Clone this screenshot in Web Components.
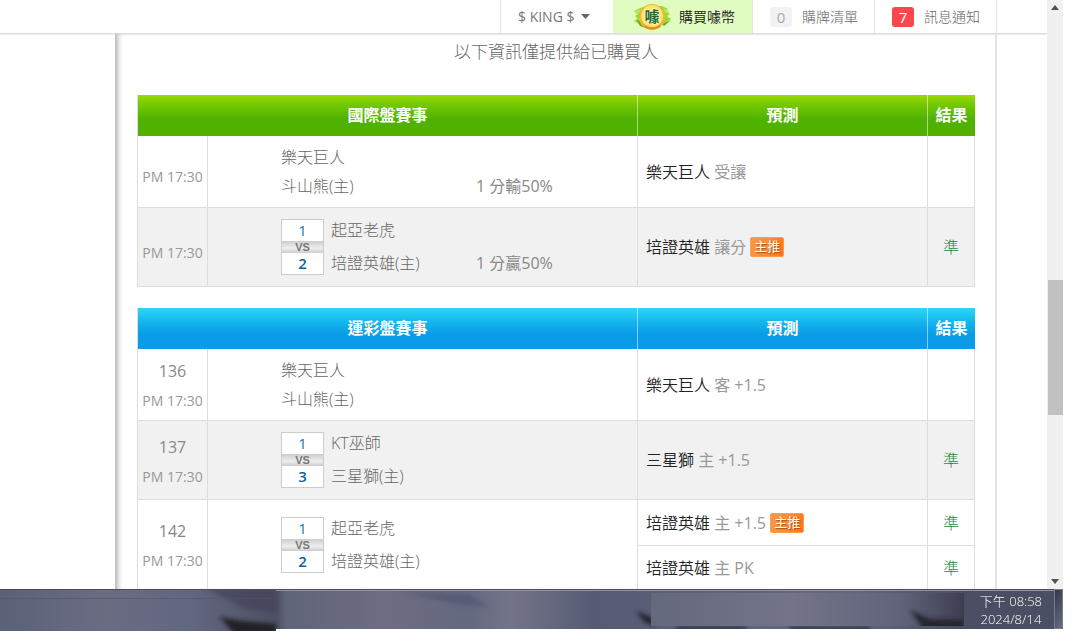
<!DOCTYPE html>
<html lang="zh-Hant">
<head>
<meta charset="utf-8">
<title>國際盤賽事</title>
<style>
  body {
    margin: 0;
    height: 100vh;
    overflow: hidden;
    background: #fff;
    color: #666;
    font: 300 16px/28px "Open Sans", "Noto Sans CJK TC", sans-serif;
  }
</style>
</head>
<body>
<desk-top>
  <nav-bar slot="nav">
    <nav-item kind="menu">$ KING $</nav-item>
    <nav-item kind="coin">購買噱幣</nav-item>
    <nav-item count="0">購牌清單</nav-item>
    <nav-item count="7" hot>訊息通知</nav-item>
  </nav-bar>
  <page-panel>
    <span slot="notice">以下資訊僅提供給已購買人</span>
    <odds-board theme="green" label="國際盤賽事"></odds-board>
    <odds-board theme="blue" label="運彩盤賽事"></odds-board>
  </page-panel>
  <scroll-track slot="scroll"></scroll-track>
  <task-bar slot="taskbar">
    <span slot="time">下午 08:58</span>
    <span slot="date">2024/8/14</span>
  </task-bar>
</desk-top>

<script>
class Base extends HTMLElement {
  constructor() {
    super();
    this.attachShadow({ mode: "open" });
  }
  connectedCallback() {
    this.shadowRoot.innerHTML = this.render();
  }
}

class DeskTop extends Base {
  render() {
    return `
<style>
  :host { display: flex; flex-direction: column; height: 100vh; box-sizing: border-box; padding: 0 17px 3px 0; }
  .browser { flex: 1; min-height: 0; display: flex; }
  .view { flex: 1; min-width: 0; display: flex; flex-direction: column; overflow: hidden; }
</style>
<div class="browser">
  <div class="view">
    <slot name="nav"></slot>
    <slot></slot>
  </div>
  <slot name="scroll"></slot>
</div>
<slot name="taskbar"></slot>`;
  }
}

class NavBar extends Base {
  render() {
    return `
<style>
  :host { display: block; flex: none; border-bottom: 1px solid #ddd; box-shadow: 0 1px 1px #eee; }
  nav { display: flex; justify-content: flex-end; height: 33px; margin-right: 50px; border-right: 1px solid #e4e4e4; }
</style>
<nav><slot></slot></nav>`;
  }
}

class NavItem extends Base {
  render() {
    const kind = this.getAttribute("kind");
    const count = this.getAttribute("count");
    const style = `
<style>
  :host { display: flex; box-sizing: border-box; border-left: 1px solid #e4e4e4; }
  :host([kind="coin"]) { border-color: #e0fcc0; background: #e0fcc0; }
  a, button {
    display: flex; align-items: center; padding: 0 17px; border: 0; background: none;
    font: 300 14px/20px "Open Sans", "Noto Sans CJK TC", sans-serif; color: #666; text-decoration: none;
  }
  button { width: 112px; gap: 6px; font-weight: 400; color: #777; white-space: nowrap; }
  .coin { gap: 6px; color: #222; font-weight: 350; }
  .list { gap: 10px; padding: 0 16px 0 17px; }
  .count {
    width: 22px; border-radius: 3px; background: #f2f2f2; color: #aaa;
    font-size: 15px; font-weight: 400; text-align: center;
  }
  :host([hot]) .count { background: #f9484c; color: #fff; }
  svg { display: block; flex: none; }
</style>`;
    if (kind === "menu") {
      return `${style}
<button type="button"><slot></slot>
  <svg width="9" height="5" viewBox="0 0 9 5"><path d="M0 0h9L4.5 5z" fill="#666"/></svg>
</button>`;
    }
    if (kind === "coin") {
      return `${style}
<a class="coin" href="#coin">
  <svg width="42" height="30" viewBox="0 0 42 30">
    <path d="M3 9l6-3 4-1 18-1 6 3-2 2 4 3-3 2 4 3-6 4-12 4-10-1-9-5 4-2-3-3 3-2z" fill="#9ad83c"/>
    <path d="M3 9l8-2-5 6zM2 19l9 2 3 4zM33 6l5 4-4 1z" fill="#bfe85a"/>
    <path d="M5 17l6 4 6 6-8-3zM31 22l9-4-7 6z" fill="#5fae2a"/>
    <circle cx="21" cy="15" r="13" fill="#f2b52b"/>
    <circle cx="21" cy="14" r="11" fill="#ffe56c"/>
    <path d="M13 24q8 5 16 0" fill="none" stroke="#dc8b22" stroke-width="2"/>
    <text x="21" y="20" text-anchor="middle" font-family="Noto Sans CJK TC" font-size="15" font-weight="700" fill="#226b2a" stroke="#fff" stroke-width="1" paint-order="stroke">噱</text>
  </svg><slot></slot>
</a>`;
    }
    return `${style}
<a class="list" href="#list"><span class="count">${count}</span><slot></slot></a>`;
  }
}

class PagePanel extends Base {
  render() {
    return `
<style>
  :host {
    display: block; flex: 1; min-height: 0; overflow: hidden; margin: 0 50px 0 115px; padding: 0 20px;
    border-left: 2px solid #c4c4c4; border-right: 2px solid #e4e4e4;
    box-shadow: inset 4px 0 4px -2px #ccc;
  }
  .notice { margin: 0 0 26px; font-size: 17px; line-height: 35px; text-align: center; }
</style>
<p class="notice"><slot name="notice"></slot></p>
<slot></slot>`;
  }
}

class MatchUp extends Base {
  render() {
    const [a, b] = (this.getAttribute("ranks") || "").split(",");
    const ranks = a ? `
<div class="ranks"><span>${a}</span><small>VS</small><b>${b}</b></div>` : "";
    return `
<style>
  :host { display: flex; align-items: center; padding-left: 73px; color: #666; }
  .ranks {
    width: 41px; margin-right: 7px; border: 1px solid #ccc; background: #fff;
    line-height: 21px; text-align: center; color: #1879a8;
  }
  .ranks span, .ranks small, .ranks b { display: block; }
  .ranks span, .ranks b { font-size: 15px; font-weight: 400; }
  .ranks b { font-weight: 600; color: #0a64a0; }
  .ranks small {
    background: linear-gradient(#ccc, #eee 60%, #ccc);
    font: 700 11px/12px "Liberation Sans", sans-serif; color: #777;
  }
  .teams { flex: 1; display: grid; grid-template-columns: 145px 1fr; line-height: 33px; }
  :host(:not([ranks])) .teams { grid-template-columns: 195px 1fr; line-height: 29px; }
  .top { grid-column: 1 / 3; }
  .rate { font-weight: 400; color: #888; }
</style>
${ranks}
<div class="teams">
  <div class="top"><slot name="away"></slot></div>
  <div><slot name="home"></slot></div>
  <div class="rate"><slot name="rate"></slot></div>
</div>`;
  }
}

class PickBadge extends Base {
  render() {
    return `
<style>
  :host {
    display: inline-block; box-sizing: border-box; width: 34px; height: 20px; border: 1px solid #ff9c4a; border-radius: 2px;
    background: linear-gradient(100deg, #f09a50, #f58a35 60%, #ff7416);
    color: #fff; font-size: 13px; line-height: 17px; font-weight: 400; text-align: center;
    text-shadow: 1px 1px 1px #a84f10; vertical-align: 2px;
  }
</style>
<slot></slot>`;
  }
}

const boards = {
  green: [
    { away: "樂天巨人", home: "斗山熊(主)", rate: "1 分輸50%", picks: [["樂天巨人", "受讓"]] },
    { ranks: "1,2", away: "起亞老虎", home: "培證英雄(主)", rate: "1 分贏50%", picks: [["培證英雄", "讓分", true, "準"]] },
  ],
  blue: [
    { no: 136, away: "樂天巨人", home: "斗山熊(主)", picks: [["樂天巨人", "客 +1.5"]] },
    { no: 137, ranks: "1,3", away: "KT巫師", home: "三星獅(主)", picks: [["三星獅", "主 +1.5", false, "準"]] },
    { no: 142, ranks: "1,2", away: "起亞老虎", home: "培證英雄(主)", picks: [["培證英雄", "主 +1.5", true, "準"], ["培證英雄", "主 PK", false, "準"]] },
  ],
};

class OddsBoard extends Base {
  row(game, index) {
    const span = game.picks.length;
    const pick = ([team, side, main, result = ""]) => `
<td class="pick"><strong>${team}</strong> ${side}${main ? " <pick-badge>主推</pick-badge>" : ""}</td>
<td class="result">${result}</td>`;
    const size = span > 1 ? "split" : game.ranks ? "tall" : "short";
    return `
<tr class="${size}${index % 2 ? " odd" : ""}">
  <td class="time${game.no ? " numbered" : ""}" rowspan="${span}">${game.no ? `<div class="no">${game.no}</div>` : ""}<div>PM 17:30</div></td>
  <td rowspan="${span}">
    <match-up${game.ranks ? ` ranks="${game.ranks}"` : ""}>
      <span slot="away">${game.away}</span>
      <span slot="home">${game.home}</span>
      <span slot="rate">${game.rate || ""}</span>
    </match-up>
  </td>
  ${pick(game.picks[0])}
</tr>
${game.picks.slice(1).map((p) => `<tr class="split last">${pick(p)}</tr>`).join("")}`;
  }
  render() {
    return `
<style>
  :host { display: block; margin-bottom: 21px; --head: linear-gradient(#98da08, #6cc400 30%, #4fb200 60%, #52b000); }
  :host([theme="blue"]) { --head: linear-gradient(#2ad8f4, #14b4ee 35%, #0a9be6 65%, #0a9cec); }
  table { width: 100%; table-layout: fixed; border-collapse: separate; border-spacing: 0; border-left: 1px solid #ddd; }
  .c-time { width: 70px; }
  .c-pick { width: 290px; }
  .c-result { width: 47px; }
  thead { background: var(--head); }
  th { height: 41px; box-sizing: border-box; padding: 0 0 2px; border-right: 1px solid #ffffff80; color: #fff; font-weight: 700; }
  th:last-child { border-right: 0; }
  td { box-sizing: border-box; padding: 0; border-right: 1px solid #ddd; border-bottom: 1px solid #ddd; }
  .short td { height: 72px; }
  .tall td { height: 79px; }
  .split td { height: 46px; }
  .last td { height: 44px; }
  .odd { background: #f1f1f1; }
  td.time { padding-top: 10px; font-size: 14px; font-weight: 400; line-height: 29px; text-align: center; white-space: nowrap; color: #999; }
  td.numbered { padding-top: 3px; }
  .no { font-size: 16px; color: #888; }
  td.pick { padding-left: 8px; color: #999; font-weight: 400; }
  strong { font-weight: 350; color: #222; }
  .result { text-align: center; color: #1f8a38; }
</style>
<table>
  <colgroup><col class="c-time"><col><col class="c-pick"><col class="c-result"></colgroup>
  <thead><tr><th colspan="2">${this.getAttribute("label")}</th><th>預測</th><th>結果</th></tr></thead>
  <tbody>${boards[this.getAttribute("theme")].map((g, i) => this.row(g, i)).join("")}</tbody>
</table>`;
  }
}

class ScrollTrack extends Base {
  render() {
    return `
<style>
  :host { display: flex; flex-direction: column; align-items: center; width: 16px; background: #f0f0f0; }
  svg { display: block; flex: none; margin: 5px 0; }
  .before { flex: 264; }
  .thumb { flex: 135; width: 15px; background: #c1c1c1; }
  .after { flex: 158; }
</style>
<svg width="8" height="5" viewBox="0 0 8 5"><path d="M0 5h8L4 0z" fill="#505050"/></svg>
<div class="before"></div>
<div class="thumb"></div>
<div class="after"></div>
<svg width="8" height="5" viewBox="0 0 8 5"><path d="M0 0h8L4 5z" fill="#505050"/></svg>`;
  }
}

class TaskBar extends Base {
  render() {
    return `
<style>
  :host {
    position: relative; display: flex; flex: none; justify-content: flex-end; height: 42px; overflow: hidden;
    color: #fff; font-size: 13px; line-height: 18px; text-align: center;
  }
  svg { position: absolute; inset: 0; width: 100%; height: 100%; }
  .clock { position: relative; margin-right: 12px; padding-top: 3px; }
  .edge { position: relative; box-sizing: border-box; width: 9px; height: 40px; border: 1px solid #777b8c; background: linear-gradient(120deg, #34384a, #686c80); }
</style>
<svg viewBox="0 0 1063 42" preserveAspectRatio="none">
  <defs>
    <linearGradient id="sky">
      <stop offset="0" stop-color="#5c6178"/><stop offset=".1" stop-color="#6a6c82"/>
      <stop offset=".18" stop-color="#62667f"/><stop offset=".26" stop-color="#4e5164"/>
      <stop offset=".27" stop-color="#606579"/><stop offset=".36" stop-color="#6e6c82"/>
      <stop offset=".44" stop-color="#646980"/><stop offset=".48" stop-color="#737488"/>
      <stop offset=".56" stop-color="#565b74"/><stop offset=".8" stop-color="#656880"/>
      <stop offset=".9" stop-color="#4c4e63"/><stop offset="1" stop-color="#4b4f63"/>
    </linearGradient>
    <linearGradient id="patch">
      <stop offset="0" stop-color="#65697e"/><stop offset=".45" stop-color="#737488"/>
      <stop offset=".8" stop-color="#60637b"/><stop offset="1" stop-color="#3d3e50"/>
    </linearGradient>
    <filter id="soft" x="-20%" y="-50%" width="140%" height="200%"><feGaussianBlur stdDeviation="2"/></filter>
    <clipPath id="bar"><path d="M0 0h1063v40H276v2H0z"/></clipPath>
    <clipPath id="glass"><path d="M651 4h313v33H651z"/></clipPath>
  </defs>
  <g clip-path="url(#bar)">
    <path d="M0 0h1063v42H0z" fill="url(#sky)"/>
    <g filter="url(#soft)">
      <path d="M207 0h69v24l-30-4z" fill="#41455a" opacity=".7"/>
      <path d="M220 28l22 4 34 3v10h-42z" fill="#202026"/>
      <path d="M400 2l70 4 20 12-34-3z" fill="#4f536d" opacity=".6"/>
      <path d="M636 22l18 7v8l-10-4z" fill="#252630"/>
      <path d="M676 38h70v4h-70zM790 38h80v4h-80z" fill="#292a34"/>
    </g>
    <path d="M651 4h313v33H651z" fill="url(#patch)"/>
    <g clip-path="url(#glass)"><path d="M910 21l20 9 34 1v10h-40z" fill="#25252e" filter="url(#soft)"/></g>
    <path d="M0 0h1063v1H0z" fill="#4c4e59"/>
    <path d="M0 9h276v1H0z" fill="#51556b" opacity=".6"/>
    <path d="M276 1h787v1H276z" fill="#9193a0"/>
  </g>
</svg>
<div class="clock"><slot name="time"></slot><br><slot name="date"></slot></div>
<div class="edge"></div>`;
  }
}

customElements.define("desk-top", DeskTop);
customElements.define("nav-bar", NavBar);
customElements.define("nav-item", NavItem);
customElements.define("page-panel", PagePanel);
customElements.define("match-up", MatchUp);
customElements.define("pick-badge", PickBadge);
customElements.define("odds-board", OddsBoard);
customElements.define("scroll-track", ScrollTrack);
customElements.define("task-bar", TaskBar);
</script>
</body>
</html>
